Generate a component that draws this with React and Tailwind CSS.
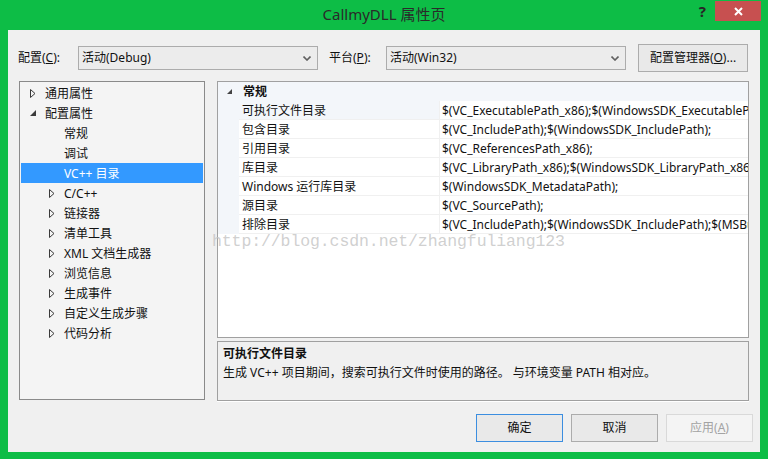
import React from "react";

const tree = [
  { label: "通用属性", level: 0, arrow: "closed" },
  { label: "配置属性", level: 0, arrow: "open" },
  { label: "常规", level: 1 },
  { label: "调试", level: 1 },
  { label: "VC++ 目录", level: 1, selected: true },
  { label: "C/C++", level: 1, arrow: "closed" },
  { label: "链接器", level: 1, arrow: "closed" },
  { label: "清单工具", level: 1, arrow: "closed" },
  { label: "XML 文档生成器", level: 1, arrow: "closed" },
  { label: "浏览信息", level: 1, arrow: "closed" },
  { label: "生成事件", level: 1, arrow: "closed" },
  { label: "自定义生成步骤", level: 1, arrow: "closed" },
  { label: "代码分析", level: 1, arrow: "closed" },
];

const props = [
  ["可执行文件目录", "$(VC_ExecutablePath_x86);$(WindowsSDK_ExecutablePath);$(VS_ExecutablePath);$(MSBuild_ExecutablePath)"],
  ["包含目录", "$(VC_IncludePath);$(WindowsSDK_IncludePath);"],
  ["引用目录", "$(VC_ReferencesPath_x86);"],
  ["库目录", "$(VC_LibraryPath_x86);$(WindowsSDK_LibraryPath_x86);"],
  ["Windows 运行库目录", "$(WindowsSDK_MetadataPath);"],
  ["源目录", "$(VC_SourcePath);"],
  ["排除目录", "$(VC_IncludePath);$(WindowsSDK_IncludePath);$(MSBuildToolsPath32);"],
];

function ClosedArrow() {
  return (
    <svg width="6" height="9" viewBox="0 0 6 9" className="shrink-0">
      <path d="M0.5 0.5 L5 4.5 L0.5 8.5 Z" fill="none" stroke="#3a3a3a" strokeWidth="1" />
    </svg>
  );
}

function OpenArrow() {
  return (
    <svg width="6" height="6" viewBox="0 0 6 6" className="shrink-0">
      <path d="M6 0 L6 6 L0 6 Z" fill="#3a3a3a" />
    </svg>
  );
}

function Chevron() {
  return (
    <svg width="8" height="5" viewBox="0 0 8 5">
      <polyline points="0.5,0.5 4,4 7.5,0.5" fill="none" stroke="#606060" strokeWidth="1.6" />
    </svg>
  );
}

function Select({ value }) {
  return (
    <div className="w-[240px] h-[24px] border border-[#acacac] bg-[#ececec] flex items-center justify-between pl-[3px] pr-[6px]">
      <span>{value}</span>
      <Chevron />
    </div>
  );
}

export default function App() {
  return (
    <div className="w-[768px] h-[459px] bg-[#0dbd46] flex flex-col text-[12px] leading-none text-[#111] font-['Noto_Sans','Noto_Sans_CJK_SC',sans-serif]">
      <div className="h-[30px] grid grid-cols-[1fr_auto_1fr]">
        <div />
        <div className="flex items-center text-[15px] text-[#2a2a2a] pb-[1px]">CallmyDLL 属性页</div>
        <div className="flex justify-end items-start">
          <span className="mt-[4px] mr-[9px] text-[15px] font-bold text-[#262626]">?</span>
          <div className="mt-[1px] mr-[7px] w-[46px] h-[20px] bg-[#c75050] flex items-center justify-center">
            <svg width="9" height="9" viewBox="0 0 9 9">
              <path d="M1 1 L8 8 M8 1 L1 8" stroke="#fff" strokeWidth="2" />
            </svg>
          </div>
        </div>
      </div>

      <div className="mx-[8px] h-[422px] bg-[#f0f0f0] flex flex-col">
        <div className="mt-[14px] h-[28px] flex items-center">
          <span className="ml-[10px] w-[60px]">
            配置(<span className="underline">C</span>):
          </span>
          <Select value="活动(Debug)" />
          <span className="ml-[11px] w-[57px]">
            平台(<span className="underline">P</span>):
          </span>
          <Select value="活动(Win32)" />
          <div className="ml-[12px] w-[110px] h-[28px] border border-[#acacac] bg-[#e9e9e9] flex items-center justify-center">
            配置管理器(<span className="underline">O</span>)...
          </div>
        </div>

        <div className="mt-[9px] flex relative">
          <div className="ml-[11px] w-[186px] h-[319px] border border-[#8a8a8a] bg-[#f4f4f4] p-px">
            {tree.map((t) => (
              <div
                key={t.label}
                className={
                  "h-[20px] flex items-center " +
                  (t.level === 0 ? "pl-[9px] " : "pl-[28px] ") +
                  (t.selected ? "bg-[#3399ff] text-white" : "")
                }
              >
                <span className="w-[15px] flex items-center">
                  {t.arrow === "closed" && <ClosedArrow />}
                  {t.arrow === "open" && <OpenArrow />}
                </span>
                <span className="pt-px">{t.label}</span>
              </div>
            ))}
          </div>

          <div className="ml-[12px] w-[532px] flex flex-col">
            <div className="h-[257px] border border-[#a0a0a0] bg-white overflow-hidden">
              <div className="h-[19px] flex items-center bg-[#f3f6fa]">
                <span className="ml-[9px] w-[16px] flex items-center">
                  <svg width="5" height="5" viewBox="0 0 5 5">
                    <path d="M5 0 L5 5 L0 5 Z" fill="#444" />
                  </svg>
                </span>
                <span className="font-bold pt-px">常规</span>
              </div>
              {props.map(([name, value], i) => (
                <div key={name} className="h-[19px] flex">
                  <div className="w-[21px] shrink-0 bg-[#f3f6fa]" />
                  <div
                    className={
                      "w-[201px] shrink-0 border-b border-r border-[#f0f0f0] flex items-center pl-[3px] pt-[2px] " +
                      (i === 0 ? "bg-[#f3f6fa]" : "")
                    }
                  >
                    {name}
                  </div>
                  <div className="flex-1 min-w-0 border-b border-[#f0f0f0] flex items-center pl-[2px] pt-[2px] whitespace-nowrap overflow-hidden">
                    {value}
                  </div>
                </div>
              ))}
            </div>
            <div className="mt-[3px] h-[60px] border border-[#a0a0a0] bg-[#f0f0f0] shadow-[0_1px_0_#fff] px-[5px] pt-[6px] flex flex-col gap-[7px]">
              <span className="font-bold">可执行文件目录</span>
              <span>生成 VC++ 项目期间，搜索可执行文件时使用的路径。 与环境变量 PATH 相对应。</span>
            </div>
          </div>

          <span className="absolute left-[204px] top-[153px] text-[16.5px] tracking-[-0.1px] text-[#c4c4c4]/80 font-['Liberation_Mono',monospace] pointer-events-none">
            http://blog.csdn.net/zhangfuliang123
          </span>
        </div>

        <div className="mt-[13px] mr-[7px] flex justify-end gap-[8px]">
          <div className="w-[87px] h-[28px] border border-[#3c8ee0] bg-[#e9e9e9] flex items-center justify-center">确定</div>
          <div className="w-[87px] h-[28px] border border-[#acacac] bg-[#e9e9e9] flex items-center justify-center">取消</div>
          <div className="w-[87px] h-[28px] border border-[#d9d9d9] bg-[#f4f4f4] text-[#a3a3a3] flex items-center justify-center">
            应用(<span className="underline">A</span>)
          </div>
        </div>
      </div>
    </div>
  );
}
